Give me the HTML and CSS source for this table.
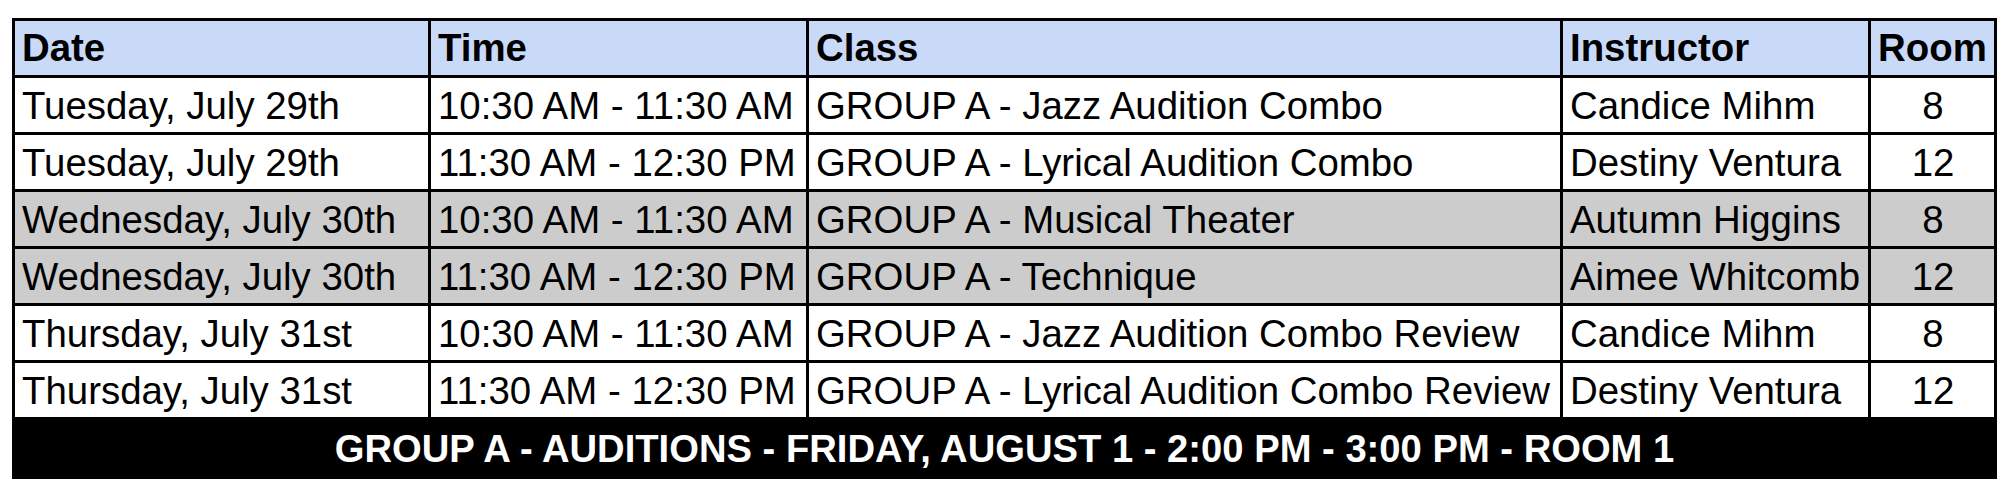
FILE: index.html
```html
<!DOCTYPE html>
<html>
<head>
<meta charset="utf-8">
<link rel="stylesheet" href="styles.css">
</head>
<body>
<div class="page">
  <div class="sheet">
    <div class="cell head">Date</div>
    <div class="cell head">Time</div>
    <div class="cell head">Class</div>
    <div class="cell head">Instructor</div>
    <div class="cell head">Room</div>

    <div class="cell">Tuesday, July 29th</div>
    <div class="cell">10:30 AM - 11:30 AM</div>
    <div class="cell">GROUP A - Jazz Audition Combo</div>
    <div class="cell">Candice Mihm</div>
    <div class="cell center">8</div>

    <div class="cell">Tuesday, July 29th</div>
    <div class="cell">11:30 AM - 12:30 PM</div>
    <div class="cell">GROUP A - Lyrical Audition Combo</div>
    <div class="cell">Destiny Ventura</div>
    <div class="cell center">12</div>

    <div class="cell gray">Wednesday, July 30th</div>
    <div class="cell gray">10:30 AM - 11:30 AM</div>
    <div class="cell gray">GROUP A - Musical Theater</div>
    <div class="cell gray">Autumn Higgins</div>
    <div class="cell gray center">8</div>

    <div class="cell gray">Wednesday, July 30th</div>
    <div class="cell gray">11:30 AM - 12:30 PM</div>
    <div class="cell gray">GROUP A - Technique</div>
    <div class="cell gray">Aimee Whitcomb</div>
    <div class="cell gray center">12</div>

    <div class="cell">Thursday, July 31st</div>
    <div class="cell">10:30 AM - 11:30 AM</div>
    <div class="cell">GROUP A - Jazz Audition Combo Review</div>
    <div class="cell">Candice Mihm</div>
    <div class="cell center">8</div>

    <div class="cell">Thursday, July 31st</div>
    <div class="cell">11:30 AM - 12:30 PM</div>
    <div class="cell">GROUP A - Lyrical Audition Combo Review</div>
    <div class="cell">Destiny Ventura</div>
    <div class="cell center">12</div>

    <div class="footer">GROUP A - AUDITIONS - FRIDAY, AUGUST 1 - 2:00 PM - 3:00 PM - ROOM 1</div>
  </div>
</div>
</body>
</html>
```
FILE: styles.css
```css
html, body {
  margin: 0;
  padding: 0;
  background: #ffffff;
}

.page {
  padding: 18px 0 0 12px;
  font-family: "Liberation Sans", Arial, sans-serif;
  font-size: 38.4px;
  color: #000000;
}

.sheet {
  display: grid;
  grid-template-columns: 413px 375px 751px 305px 123px;
  grid-template-rows: repeat(7, 54px) 56px;
  gap: 3px;
  padding: 3px;
  background: #000000;
  width: fit-content;
}

.cell {
  background: #ffffff;
  padding: 1px 6px 0 7px;
  display: flex;
  align-items: center;
  white-space: nowrap;
  overflow: hidden;
}

.head {
  background: #c9daf8;
  font-weight: bold;
  padding-top: 0;
}

.gray {
  background: #cccccc;
}

.center {
  justify-content: center;
}

.footer {
  grid-column: 1 / -1;
  background: #000000;
  padding-top: 2px;
  display: flex;
  align-items: center;
  justify-content: center;
  color: #ffffff;
  font-weight: bold;
  font-size: 38.2px;
  white-space: nowrap;
}
```
